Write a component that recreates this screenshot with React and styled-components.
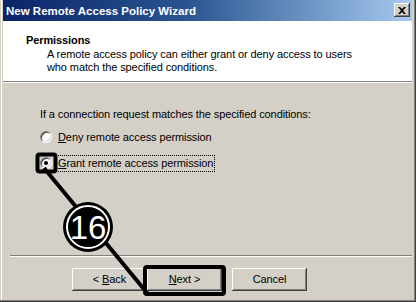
import React from 'react';
import styled, { createGlobalStyle } from 'styled-components';

const GlobalStyle = createGlobalStyle`
    html, body {
        margin:0;
        padding:0;
        background:#d4d0c8;
    }
    body {
        font-family:Tahoma, "Liberation Sans", Arial, sans-serif;
        font-size:11px;
        letter-spacing:-0.1px;
        color:#000;
    }
`;

const WindowStyled = styled.div`
    position:relative;
    width:416px;
    height:302px;
    box-sizing:border-box;
    padding:0 4px 4px 3px;
    background:#d4d0c8;
    display:flex;
    flex-direction:column;
    box-shadow:inset -1px -1px #404040, inset -2px -2px #808080, inset 1px 0 #d4d0c8, inset 2px 0 #ffffff;
    overflow:hidden;
`;

const TitleBar = styled.div`
    height:21px;
    flex:none;
    display:flex;
    align-items:center;
    justify-content:space-between;
    padding:0 2px 0 3px;
    background:linear-gradient(to right, #0a246a 0%, #2a5590 45%, #a6caf0 100%);
    color:#fff;
    font-weight:bold;
    font-size:11.5px;
    letter-spacing:0;
`;

const CloseButton = styled.div`
    width:16px;
    height:14px;
    box-sizing:border-box;
    background:#d4d0c8;
    box-shadow:inset -1px -1px #404040, inset 1px 1px #ffffff, inset -2px -2px #808080;
    display:flex;
    align-items:center;
    justify-content:center;
    margin-top:-1px;
`;

const Header = styled.div`
    height:60px;
    flex:none;
    background:#fff;
    box-sizing:border-box;
    padding:12px 0 0 23px;
`;

const HeaderTitle = styled.div`
    font-weight:bold;
    font-size:11px;
    line-height:14px;
`;

const HeaderText = styled.div`
    padding-left:21px;
    line-height:13px;
    margin-top:1px;
`;

const Separator = styled.div`
    height:0;
    flex:none;
    border-top:1px solid #808080;
    border-bottom:1px solid #ffffff;
    margin-left:${p => p.$inset || 0}px;
`;

const Body = styled.div`
    flex:1;
    padding:25px 0 0 37px;
`;

const Prompt = styled.div`
    line-height:13px;
    margin-bottom:3px;
`;

const Option = styled.label`
    display:flex;
    align-items:center;
    height:26px;
    gap:5px;
`;

const Radio = styled.span`
    position:relative;
    width:12px;
    height:12px;
    box-sizing:border-box;
    border-radius:50%;
    background:#fff;
    border:1px solid;
    border-color:#808080 #ffffff #ffffff #808080;
    box-shadow:inset 1px 1px #404040, inset -1px -1px #d4d0c8;
    flex:none;
    &::after {
        content:'';
        display:${p => (p.$checked ? 'block' : 'none')};
        position:absolute;
        left:3px;
        top:3px;
        width:4px;
        height:4px;
        border-radius:50%;
        background:#000;
    }
`;

const OptionLabel = styled.span`
    padding:1px 1px;
    line-height:13px;
    outline:${p => (p.$focused ? '1px dotted #000' : 'none')};
    u { text-decoration:underline; }
`;

const ButtonRow = styled.div`
    flex:none;
    height:41px;
    display:flex;
    align-items:flex-start;
    padding:11px 0 0 69px;
    box-sizing:border-box;
`;

const Button = styled.div`
    width:75px;
    height:23px;
    box-sizing:border-box;
    background:#d4d0c8;
    box-shadow:inset -1px -1px #404040, inset 1px 1px #ffffff, inset -2px -2px #808080;
    display:flex;
    align-items:center;
    justify-content:center;
    margin-right:${p => p.$gap || 0}px;
    line-height:13px;
    white-space:pre;
`;

const Overlay = styled.svg`
    position:absolute;
    left:0;
    top:0;
    pointer-events:none;
`;

function Annotation() {
    return (
        <Overlay width="416" height="302" viewBox="0 0 416 302">
            <line x1="44" y1="168" x2="148" y2="294" stroke="#000" strokeWidth="4" />
            <rect x="37.5" y="154.5" width="18" height="17" rx="2" fill="none" stroke="#000" strokeWidth="4" />
            <rect x="145" y="267" width="79" height="27" rx="2" fill="none" stroke="#000" strokeWidth="4" />
            <circle cx="88" cy="227" r="25" fill="#000" />
            <circle cx="88" cy="227" r="21" fill="none" stroke="#fff" strokeWidth="2" />
            <text x="88" y="239" textAnchor="middle" fill="#fff" fontFamily="'Liberation Sans', Arial, sans-serif" fontSize="33">16</text>
        </Overlay>
    );
}

export default function App() {
    return (
        <>
            <GlobalStyle />
            <WindowStyled>
                <TitleBar>
                    <span>New Remote Access Policy Wizard</span>
                    <CloseButton>
                        <svg width="8" height="7" viewBox="0 0 8 7">
                            <path d="M0 0h2l2 2 2-2h2L5 3.5 8 7H6L4 5 2 7H0l3-3.5z" fill="#000" />
                        </svg>
                    </CloseButton>
                </TitleBar>
                <Header>
                    <HeaderTitle>Permissions</HeaderTitle>
                    <HeaderText>
                        A remote access policy can either grant or deny access to users<br />
                        who match the specified conditions.
                    </HeaderText>
                </Header>
                <Separator />
                <Body>
                    <Prompt>If a connection request matches the specified conditions:</Prompt>
                    <Option>
                        <Radio />
                        <OptionLabel><u>D</u>eny remote access permission</OptionLabel>
                    </Option>
                    <Option>
                        <Radio $checked />
                        <OptionLabel $focused><u>G</u>rant remote access permission</OptionLabel>
                    </Option>
                </Body>
                <Separator $inset={7} />
                <ButtonRow>
                    <Button><span>&lt; <u>B</u>ack</span></Button>
                    <Button $gap={10}><span><u>N</u>ext &gt;</span></Button>
                    <Button>Cancel</Button>
                </ButtonRow>
                <Annotation />
            </WindowStyled>
        </>
    );
}
